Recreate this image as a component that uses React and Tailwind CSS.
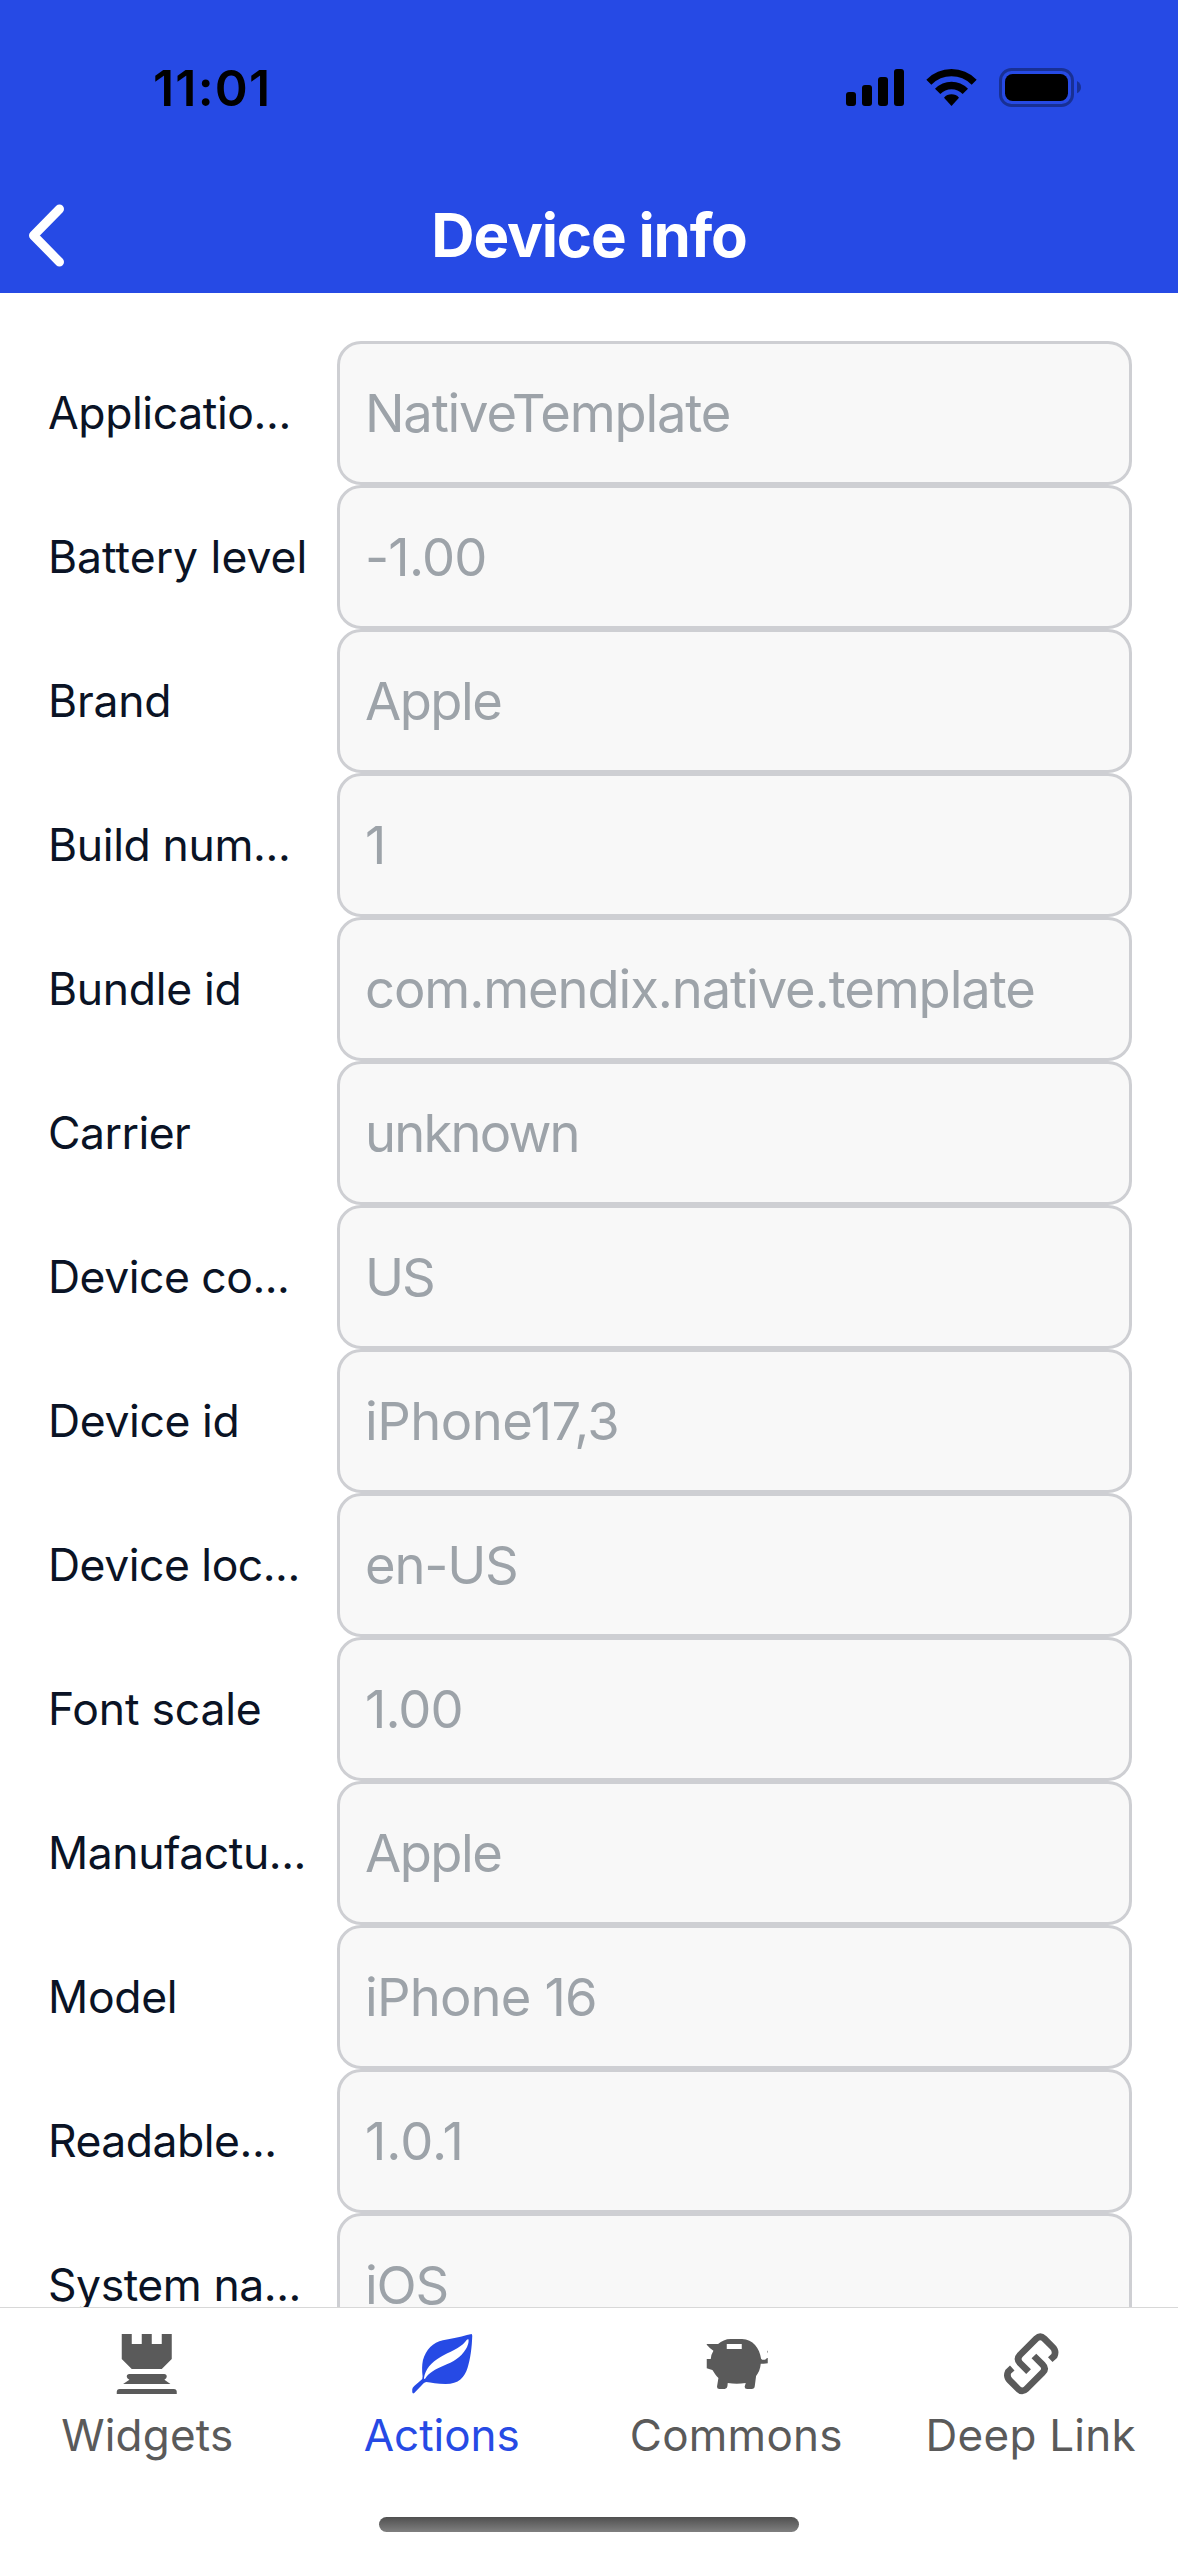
const rows = [
  ['Applicatio...', 'tracking-[-0.4px]', 'NativeTemplate', 'tracking-[-1.2px]'],
  ['Battery level', 'tracking-[0px]', '-1.00', 'tracking-[-0.8px]'],
  ['Brand', 'tracking-[-0.2px]', 'Apple', 'tracking-[-1.5px]'],
  ['Build num...', 'tracking-[-0.36px]', '1', 'tracking-[0px]'],
  ['Bundle id', 'tracking-[-0.3px]', 'com.mendix.native.template', 'tracking-[-1.1px]'],
  ['Carrier', 'tracking-[-0.5px]', 'unknown', 'tracking-[-1.8px]'],
  ['Device co...', 'tracking-[-0.5px]', 'US', 'tracking-[-2px]'],
  ['Device id', 'tracking-[-0.4px]', 'iPhone17,3', 'tracking-[-0.5px]'],
  ['Device loc...', 'tracking-[-0.5px]', 'en-US', 'tracking-[-1.2px]'],
  ['Font scale', 'tracking-[-0.2px]', '1.00', 'tracking-[-0.9px]'],
  ['Manufactu...', 'tracking-[-0.45px]', 'Apple', 'tracking-[-1.5px]'],
  ['Model', 'tracking-[-0.3px]', 'iPhone 16', 'tracking-[-0.8px]'],
  ['Readable...', 'tracking-[-0.5px]', '1.0.1', 'tracking-[0px]'],
  ['System na...', 'tracking-[-0.45px]', 'iOS', 'tracking-[-1.2px]'],
];

function StatusIcons() {
  return (
    <div className="flex items-center gap-[22px] text-black">
      <svg className="h-[39px] w-[58px]" viewBox="138 84 174 117" fill="currentColor">
        <rect x="138" y="156" width="30" height="42" rx="9" />
        <rect x="186" y="135" width="30" height="63" rx="9" />
        <rect x="234" y="111" width="30" height="87" rx="9" />
        <rect x="282" y="87" width="30" height="111" rx="9" />
      </svg>
      <svg className="h-[39px] w-[51px]" viewBox="378 84 153 117" fill="currentColor">
        <path d="M379 119Q411 87 454.500 87T530 119L515 134Q489 109 454.500 109T394 134Z" />
        <path d="M405 146Q426 125 454.500 125T504 146L488 162Q474 148 454.500 148T421 162Z" />
        <path d="M432 173Q441 163 454.500 163T477 173L454.500 198Z" />
      </svg>
      <svg className="h-[39px] w-[83px]" viewBox="597 84 249 117">
        <rect x="601.500" y="88.500" width="216" height="108" rx="33" fill="none" stroke="#000" strokeOpacity=".35" strokeWidth="9" />
        <rect x="615" y="102" width="189" height="81" rx="23" />
        <path d="M831 123Q843 130 843 142T831 160Z" fillOpacity=".35" />
      </svg>
    </div>
  );
}

function RookIcon() {
  return (
    <svg className="size-[66px]" viewBox="72.75 63 198 198" fill="currentColor">
      <path d="M96 72H126V102H156V72H186V102H216V72H246V147L216 177H126L96 147Z" />
      <path d="M119 192H223Q231 192 231 200Q231 205 224 209L242 222H100L119 209Q111 205 111 200Q111 192 119 192Z" />
      <path d="M81 252V246Q81 237 90 237H252Q261 237 261 246V252Z" />
    </svg>
  );
}

function LeafIcon() {
  return (
    <svg className="size-[66px]" viewBox="56.25 63 198 198" fill="currentColor">
      <path
        fillRule="evenodd"
        d="M244 72Q246 73 246 78C245 112 240 150 232 173C223 201 206 222 166 222C142 222 122 218 108 216C102 217 98 222 93 227L72 249Q67 253 66 246V238Q66 233 72 228L92 211Q98 207 97 199C95 181 95 165 98 151C107 119 128 97 158 91C185 85 210 82 230 75ZM235 89C232 86 229 91 225 95C208 116 177 125 152 140C122 157 105 177 101 205Q103 209 106 204C117 188 135 178 158 168C191 154 211 144 227 117Q236 101 235 89Z"
      />
    </svg>
  );
}

function PigIcon() {
  return (
    <svg className="size-[66px]" viewBox="69.75 63 198 198" fill="currentColor">
      <path
        fillRule="evenodd"
        d="M81 102H115C125 93 138 87 153 87H187C219 87 240 116 244 146Q248 151 255 149Q261 148 261 144H264V160Q256 162 243 161C242 176 236 189 229 198L225 229Q224 237 216 237H202Q194 237 195 229L198 219Q184 221 171 221T144 219L143 229Q142 237 135 237H119Q111 237 112 229L116 204C109 198 103 188 98 180Q91 178 81 175V147H93Q94 133 101 122Q89 114 81 104ZM141 102V117H186V102Z"
      />
      <path d="M264 121Q260 125 264 130Z" />
    </svg>
  );
}

function LinkIcon() {
  return (
    <svg className="size-[66px]" viewBox="53.25 63 198 198" fill="none" stroke="currentColor" strokeWidth="20">
      <path d="M145 185L119 159Q108 147 119 135L168 86Q180 75 192 86L217 111Q229 123 222 138L210 149" />
      <path d="M161 138L187 164Q199 176 187 188L138 237Q126 249 114 237L89 212Q77 200 84 185L96 174" />
    </svg>
  );
}

const tabs = [
  { name: 'Widgets', Icon: RookIcon, color: 'text-[#5a5a5a]', track: 'tracking-[0.2px]' },
  { name: 'Actions', Icon: LeafIcon, color: 'text-[#264ae5]', track: 'tracking-[0px]' },
  { name: 'Commons', Icon: PigIcon, color: 'text-[#5a5a5a]', track: 'tracking-[0.25px]' },
  { name: 'Deep Link', Icon: LinkIcon, color: 'text-[#5a5a5a]', track: 'tracking-[0.25px]' },
];

export default function App() {
  return (
    <div className={'flex h-[2556px] w-[1178px] flex-col overflow-hidden bg-white font-["Inter","Liberation_Sans",sans-serif]'}>
      <header className="flex h-[293px] flex-col bg-[#264ae5]">
        <div className="flex h-[175px] items-center justify-between pr-24 pl-[153px]">
          <span className="pt-px text-[50px] leading-none font-semibold tracking-[1.2px] text-black">11:01</span>
          <StatusIcons />
        </div>
        <div className="grid h-[118px] grid-cols-[100px_1fr_100px] items-center pt-px text-white">
          <svg className="mt-px ml-[27px] h-[64px] w-[40px]" viewBox="0 0 40 64" fill="none" stroke="currentColor" strokeWidth="9" strokeLinecap="round" strokeLinejoin="round">
            <path d="M32.500 6L6.500 32.500L32.500 59" />
          </svg>
          <h1 className="text-center text-[60px] leading-none font-[650] tracking-[-1.2px]">Device info</h1>
        </div>
      </header>

      <main className="flex min-h-0 flex-1 flex-col overflow-hidden pt-12 pr-[46px] pl-12">
        {rows.map(([label, labelTrack, value, valueTrack]) => (
          <div key={label} className="flex h-36 shrink-0 items-center">
            <span className={`w-[289px] shrink-0 text-[44.5px] leading-none whitespace-nowrap text-[#0a1325] ${labelTrack}`}>{label}</span>
            <div className={`flex h-36 flex-1 items-center rounded-3xl border-3 border-[#cecfd3] bg-[#f8f8f8] pl-[25px] text-[52.5px] leading-none whitespace-nowrap text-[#9da3a9] ${valueTrack}`}>
              {value}
            </div>
          </div>
        ))}
      </main>

      <nav className="flex h-[249px] shrink-0 flex-col items-center border-t border-[#d8d8d8] bg-white">
        <div className="grid w-full grid-cols-4 pt-[23px]">
          {tabs.map(({ name, Icon, color, track }) => (
            <div key={name} className={`flex flex-col items-center gap-4 ${color}`}>
              <Icon />
              <span className={`text-[44px] leading-none whitespace-nowrap ${track}`}>{name}</span>
            </div>
          ))}
        </div>
        <div className="mt-[60px] h-[15px] w-[420px] rounded-full bg-linear-to-b from-[#505050] to-[#808080]" />
      </nav>
    </div>
  );
}
